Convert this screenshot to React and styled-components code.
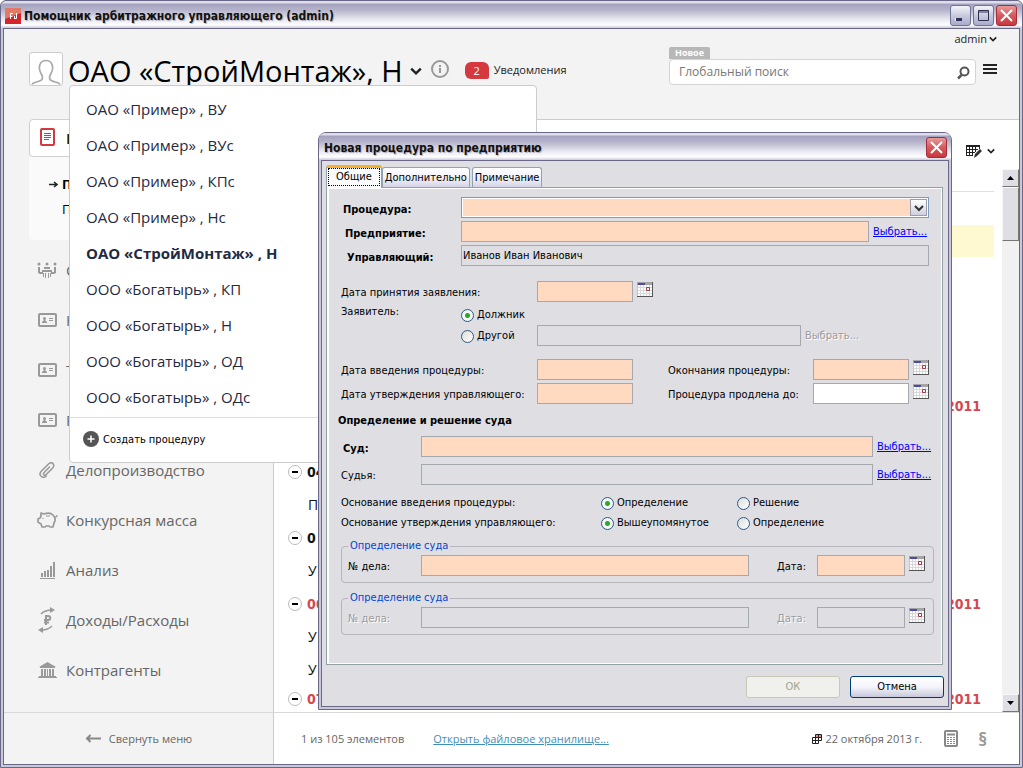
import styled, { createGlobalStyle, css } from "styled-components";

const ui = `"DejaVu Sans Condensed", "DejaVu Sans", sans-serif`;
const text = `"Open Sans", "Noto Sans", sans-serif`;

const GlobalStyle = createGlobalStyle`
  *, *::before, *::after {
    box-sizing: border-box;
  }
  body {
    margin: 0;
    font-family: ${text};
    color: #1a1a1a;
  }
  h1, h2, h3, p, ul {
    margin: 0;
    padding: 0;
    list-style: none;
  }
  button, input, select {
    margin: 0;
    font: inherit;
    color: inherit;
  }
  svg {
    display: block;
    flex: none;
  }
`;

/* window frame */

const Frame = styled.div`
  display: flex;
  flex-direction: column;
  border: 1px solid #6a6888;
  border-radius: ${(p) => (p.$dialog ? "8px 8px 0 0" : "6px 6px 0 0")};
  background: #c9c8d9;
`;

const MainWindow = styled(Frame)`
  position: relative;
  min-height: 100vh;
`;

const Caption = styled.header`
  display: flex;
  align-items: center;
  gap: 2px;
  height: 27px;
  padding: 2px ${(p) => (p.$dialog ? 4 : 5)}px 0 4px;
  border-radius: 6px 6px 0 0;
  background: linear-gradient(#dddce8 0, #dddce8 2px, #a3a1bf 3px, #b5b4ca 9px, #e6e6ee 18px, #fff 24px, #c9c8d9 100%);

  h1, h2 {
    flex: 1;
    padding-left: 1px;
    font-family: ${ui};
    font-size: 12px;
    line-height: 16px;
    font-weight: bold;
    color: #111;
    text-shadow: 1px 1px 1px #aaa9bd;
  }
`;

const CaptionButton = styled.button`
  display: flex;
  align-items: center;
  justify-content: center;
  width: 21px;
  height: 21px;
  padding: 0;
  border: 1px solid ${(p) => (p.$close ? "#a32c3a" : "#6f7396")};
  border-radius: 3px;
  background: ${(p) =>
    p.$close
      ? "linear-gradient(#e89a9a, #d65a5e 50%, #c9393f)"
      : "linear-gradient(#f3f3f9, #c9cade 50%, #a9abca)"};
`;

const Client = styled.div`
  display: flex;
  flex: 1;
  flex-direction: column;
  margin: 0 2px 2px;
  border: 1px solid #6a6888;
  background: #f3f3f3;
`;

/* page header */

const PageHeader = styled.header`
  display: flex;
  align-items: flex-start;
  height: 90px;
  padding: 0 22px 0 25px;
`;

const Avatar = styled.div`
  margin-top: 23px;
  border: 1px solid #ccc;
  border-radius: 3px;
  background: #fff;
`;

const Company = styled.button`
  display: flex;
  align-items: center;
  gap: 7px;
  margin-top: 22px;
  padding: 0 0 0 5px;
  border: 0;
  background: none;
  font-size: 29px;
  line-height: 40px;
  color: #000;
  white-space: nowrap;
`;

const InfoButton = styled.button`
  margin: 31px 0 0 9px;
  padding: 0;
  border: 0;
  background: none;
`;

const Notifications = styled.a`
  display: flex;
  align-items: center;
  gap: 5px;
  margin: 32px 0 0 16px;
  font-size: 11px;
  line-height: 18px;
  color: #222;
  text-decoration: none;

  b {
    width: 24px;
    height: 17px;
    border-radius: 6px 6px 2px 6px;
    background: #d6383f;
    font-weight: normal;
    line-height: 17px;
    color: #fff;
    text-align: center;
  }
`;

const Tools = styled.div`
  display: flex;
  flex-direction: column;
  width: 330px;
  margin-left: auto;
`;

const UserMenu = styled.button`
  display: flex;
  align-items: center;
  align-self: flex-end;
  gap: 2px;
  height: 17px;
  margin-top: 1px;
  padding: 0;
  border: 0;
  background: none;
  font-size: 11px;
  line-height: 17px;
`;

const NewTag = styled.span`
  align-self: flex-start;
  margin-left: 2px;
  padding: 0 6px;
  border-radius: 2px 2px 0 0;
  background: #b8b8b8;
  font-size: 9px;
  font-weight: bold;
  line-height: 12px;
  color: #fff;
`;

const SearchLine = styled.div`
  display: flex;
  align-items: center;
  gap: 7px;
  padding-left: 2px;
`;

const SearchBox = styled.label`
  display: flex;
  flex: 1;
  align-items: center;
  height: 26px;
  padding: 0 4px 0 9px;
  border: 1px solid #d4d4d4;
  border-radius: 4px;
  background: #fff;

  input {
    flex: 1;
    min-width: 0;
    padding: 0;
    border: 0;
    outline: 0;
    background: none;
    font-size: 12px;
    line-height: 18px;
  }
  input::placeholder {
    color: #777;
    opacity: 1;
  }
`;

const PlainButton = styled.button`
  display: flex;
  align-items: center;
  gap: 4px;
  padding: 0;
  border: 0;
  background: none;
`;

/* sidebar */

const Body = styled.div`
  display: flex;
  flex: 1;
`;

const Sidebar = styled.nav`
  width: 269px;
  padding-left: 25px;
`;

const ActiveItem = styled.a`
  display: flex;
  align-items: center;
  gap: 10px;
  height: 38px;
  padding-left: 9px;
  border: 1px solid #d0d0d0;
  border-radius: 4px 0 0 4px;
  background: #fff;
  font-size: 15px;
  font-weight: bold;
  color: #222;
  text-decoration: none;
`;

const SubMenu = styled.ul`
  height: 83px;
  margin-bottom: 5px;
  padding: 15px 0 0 20px;
  border-radius: 0 0 4px 4px;
  background: #fafafa;
  font-size: 13px;
  line-height: 25px;

  li {
    display: grid;
    grid-template-columns: 13px 1fr;
    align-items: center;
  }
  a {
    grid-column: 2;
    color: #000;
    text-decoration: none;
  }
`;

const SideItem = styled.a`
  display: grid;
  grid-template-columns: 22px 1fr;
  align-items: center;
  gap: 8px;
  height: 50px;
  padding-left: 7px;
  font-size: 15px;
  color: #666;
  text-decoration: none;

  svg {
    justify-self: center;
  }
`;

/* list */

const Content = styled.main`
  display: flex;
  flex: 1;
  flex-direction: column;
  min-width: 0;
  border-top: 1px solid #ccc;
  border-left: 1px solid #ccc;
  background: #fff;
`;

const ListTools = styled.div`
  display: flex;
  align-items: center;
  justify-content: flex-end;
  gap: 14px;
  height: 49px;
  padding: 12px 24px 0 0;
  font-size: 13px;
`;

const ListArea = styled.div`
  display: flex;
  flex: 1;
`;

const List = styled.ul`
  display: flex;
  flex: 1;
  flex-direction: column;
  margin-right: 8px;
`;

const ListHead = styled.li`
  height: 23px;
  border-bottom: 1px solid #e0e0e0;
`;

const ListRow = styled.li`
  display: flex;
  align-items: center;
  gap: 5px;
  height: ${(p) => (p.$last ? "26px" : p.$marked ? "32px" : "33px")};
  padding: 0 13px 0 14px;
  background: ${(p) => (p.$marked ? "#fff9d2" : "none")};
  font-family: ${(p) => (p.$group ? ui : text)};
  font-size: 14px;
  font-weight: ${(p) => (p.$group ? "bold" : "normal")};
  color: ${(p) => (p.$late ? "#d6474d" : "#111")};

  > span:first-child {
    padding-left: 20px;
  }
  > time {
    margin-left: auto;
  }
`;

const Scrollbar = styled.div`
  display: flex;
  flex-direction: column;
  width: 17px;
  background: #f1f1f1;
`;

const bevel = css`
  border: 1px solid #f8f8fa;
  border-right-color: #77756f;
  border-bottom-color: #77756f;
  background: #dedee4;
`;

const ScrollButton = styled.button`
  display: flex;
  align-items: center;
  justify-content: center;
  height: 18px;
  padding: 0;
  ${bevel}
`;

const ScrollThumb = styled.div`
  height: 54px;
  margin-bottom: auto;
  ${bevel}
`;

const Footer = styled.footer`
  display: flex;
  height: 52px;
  border-top: 1px solid #d9d9d9;
  background: #fff;
`;

const Collapse = styled.button`
  display: flex;
  align-items: center;
  justify-content: center;
  gap: 8px;
  width: 270px;
  padding: 0;
  border: 0;
  border-right: 1px solid #ccc;
  background: #f3f3f3;
  font-size: 11px;
  color: #666;
`;

const Status = styled.div`
  display: flex;
  flex: 1;
  align-items: center;
  padding: 0 32px 0 27px;
  font-size: 11px;
  color: #666;

  a {
    margin-left: 29px;
    color: #3f8fb8;
  }
  time {
    display: flex;
    align-items: center;
    gap: 3px;
    margin-left: auto;
  }
  button {
    margin-left: 22px;
  }
  button + button {
    margin-left: 20px;
    font-size: 18px;
    font-weight: bold;
    line-height: 20px;
    color: #999;
  }
`;

/* company drop-down */

const Menu = styled.div`
  position: absolute;
  top: 84px;
  left: 68px;
  width: 468px;
  border: 1px solid #ccc;
  border-radius: 4px;
  background: #fff;

  ul {
    padding-top: 5px;
    padding-bottom: 2px;
    border-bottom: 1px solid #ddd;
  }
`;

const MenuItem = styled.a`
  display: block;
  padding-left: 16px;
  font-size: 15px;
  font-weight: ${(p) => (p.$current ? "bold" : "normal")};
  line-height: 36px;
  color: #1f2a44;
  text-decoration: none;
`;

const CreateButton = styled(PlainButton)`
  height: 44px;
  padding: 0 0 2px 13px;
  font-family: ${ui};
  font-size: 11px;
  color: #000;
`;

/* dialog */

const Dialog = styled(Frame).attrs({ role: "dialog", "aria-labelledby": "dialog-title" })`
  position: absolute;
  top: 131px;
  left: 317px;
  width: 634px;
  font-family: ${ui};
  font-size: 11px;
  line-height: 14px;
  color: #000;
`;

const DialogBody = styled(Client)`
  padding: 4px 4px 8px;
  background: #dfdee3;
`;

const Tabs = styled.div`
  display: flex;
  align-items: flex-end;
  gap: 2px;
  height: 22px;
`;

const Tab = styled.button`
  height: 20px;
  padding: 0 2px;
  border: 1px solid #8fa3b5;
  border-bottom: 0;
  border-radius: 3px 3px 0 0;
  background: linear-gradient(#fff, #f2f2fa 50%, #d5d4e8);

  ${(p) =>
    p.$active &&
    css`
      align-self: stretch;
      height: auto;
      margin-right: -2px;
      margin-bottom: -1px;
      padding: 0 1px 2px;
      border-top: 3px solid #f5b030;
      background: #fbfbfc;
      z-index: 1;

      span {
        display: block;
        padding: 1px 7px;
        border: 1px dotted #000;
      }
    `}
`;

const Pane = styled.form`
  display: flex;
  flex-direction: column;
  height: 478px;
  margin-right: 1px;
  padding: 9px 8px 0 14px;
  border: 1px solid #92a0a6;
  box-shadow: inset 2px 1px 0 #fff, inset -1px -1px 0 #fff;
`;

const Group = styled.div`
  display: flex;
  flex-direction: column;
  gap: ${(p) => p.$gap || 3}px;
  margin-bottom: ${(p) => p.$after}px;
`;

const Row = styled.div`
  display: grid;
  grid-template-columns: ${(p) => p.$cols};
  align-items: ${(p) => p.$align || "center"};
  min-height: ${(p) => p.$height || 21}px;
`;

const Label = styled.label`
  padding-top: ${(p) => (p.$bold ? 4 : 2)}px;
  padding-left: ${(p) => p.$indent || 0}px;
  font-weight: ${(p) => (p.$bold ? "bold" : "normal")};
  color: ${(p) => (p.$off ? "#9b9aa0" : "#000")};
  text-shadow: ${(p) => (p.$off ? "1px 1px 0 #fff" : "none")};
  white-space: nowrap;
`;

const RadioTitle = styled.span`
  align-self: start;
`;

const Field = styled.input`
  width: 100%;
  min-width: 0;
  height: 21px;
  padding: 0 1px;
  border: 1px solid #a3a9ae;
  border-radius: 0;
  outline: 0;
  background: ${(p) => (p.$needed ? "#ffdac0" : p.$free ? "#fff" : "#dfdee3")};
`;

const SelectBox = styled.div`
  display: flex;
  height: 21px;
  padding: 1px;
  border: 1px solid #7f9db9;
  background: #fff;

  select {
    flex: 1;
    padding: 0;
    border: 0;
    border-radius: 0;
    outline: 0;
    appearance: none;
    background: #ffdac0;
  }
  span {
    display: flex;
    align-items: center;
    justify-content: center;
    width: 17px;
    border: 1px solid #9a9cb0;
    background: linear-gradient(#fff, #cfcfe0);
    pointer-events: none;
  }
`;

const PickLink = styled.a`
  padding-left: 4px;
  color: ${(p) => (p.$off ? "#9b9aa0" : "#00f")};
  text-decoration: ${(p) => (p.$off ? "none" : "underline")};
  text-shadow: ${(p) => (p.$off ? "1px 1px 0 #fff" : "none")};
  white-space: nowrap;
`;

const Radio = styled.label`
  display: flex;
  align-items: center;
  gap: 3px;
  padding-top: 1px;
  white-space: nowrap;

  input {
    width: 13px;
    height: 13px;
    border: 1px solid #2c5a87;
    border-radius: 50%;
    appearance: none;
    background: linear-gradient(135deg, #dcdcd7, #fff);
  }
  input:checked {
    background: radial-gradient(circle, #25b025 0, #2ba52b 2px, #f6f6f4 3px);
  }
`;

const SectionTitle = styled.h3`
  margin: 0 0 8px -3px;
  font-size: 11px;
  line-height: 14px;
`;

const Ruling = styled.fieldset`
  min-width: 0;
  margin: 0 0 8px;
  padding: 2px 0 6px 6px;
  border: 1px solid #b8b4bc;
  border-radius: 4px;

  legend {
    padding: 0 2px;
    line-height: 14px;
    color: #0046d5;
  }
`;

const Buttons = styled.div`
  display: flex;
  justify-content: flex-end;
  gap: 10px;
  margin-top: 11px;
`;

const DialogButton = styled.button`
  width: 94px;
  height: 22px;
  padding: 0;
  border: 1px solid #003c74;
  border-radius: 3px;
  background: linear-gradient(#fff, #f4f4fa 50%, #c8c8dc);

  &:disabled {
    border-color: #c9c7ba;
    background: #f0f1ec;
    color: #a1a192;
  }
`;

const DateButton = styled(PlainButton)`
  align-self: start;
  padding: 1px 0 0 4px;
`;

/* icons */

const Chevron = ({ size = 10, color = "#222" }) => (
  <svg width={size} height={size} viewBox="0 0 10 10" fill="none" stroke={color} strokeWidth="2">
    <path d="M1 3l4 4 4-4" />
  </svg>
);

const CloseGlyph = () => (
  <svg width="13" height="13" viewBox="0 0 13 13" fill="none" stroke="#fff" strokeWidth="2">
    <path d="M1 1l11 11M12 1L1 12" />
  </svg>
);

const LogoIcon = () => (
  <svg width="16" height="16" viewBox="0 0 16 16">
    <rect width="16" height="16" fill="#d8232a" />
    <path d="M0 0h16v5L0 11z" fill="#e27a68" />
    <path d="M5.500 11V5.500H8M5.500 8.500h2M11.500 5v5.500H9M9.500 8v2" fill="none" stroke="#fff" />
  </svg>
);

const PersonIcon = () => (
  <svg width="32" height="32" viewBox="0 0 32 32" fill="none" stroke="#aaa" strokeWidth="1.700">
    <path d="M2 31.500c1-3 8-2 10-5 1-2 1-3-1-6-2-4-2-7-1-9 1-3 3-4 6-4s5 1 6 4c1 2 1 5-1 9-2 3-2 4-1 6 2 3 9 2 10 5" />
  </svg>
);

const InfoIcon = () => (
  <svg width="18" height="18" viewBox="0 0 18 18" fill="none" stroke="#999" strokeWidth="2">
    <circle cx="9" cy="9" r="8" />
    <path d="M9 8v5M9 5v2" />
  </svg>
);

const SearchIcon = () => (
  <svg width="15" height="15" viewBox="0 0 15 15" fill="none" stroke="#555" strokeWidth="2">
    <circle cx="8.500" cy="6.500" r="4" />
    <path d="M5.500 10L2 13.500" strokeWidth="2.500" />
  </svg>
);

const BurgerIcon = () => (
  <svg width="14" height="16" viewBox="0 0 14 16" stroke="#222" strokeWidth="2">
    <path d="M0 1h14M0 5h14M0 9h14" />
  </svg>
);

const DocIcon = () => (
  <svg width="17" height="20" viewBox="0 0 17 20" fill="none" stroke="#d6383f">
    <rect x="2" y="1" width="13" height="16" rx="1" strokeWidth="2" />
    <path d="M5 5.500h7M5 7.500h7M5 9.500h7M5 11.500h5" />
  </svg>
);

const ArrowRight = () => (
  <svg width="9" height="7" viewBox="0 0 9 7" fill="none" stroke="#222" strokeWidth="1.5">
    <path d="M0 3.5h8M5 1l3 2.500-3 2.500" />
  </svg>
);

const ArrowLeft = () => (
  <svg width="16" height="9" viewBox="0 0 16 9" fill="none" stroke="#888" strokeWidth="2">
    <path d="M16 4.500H2M5.500 1L2 4.500 5.500 8" />
  </svg>
);

const MeetingIcon = () => (
  <svg width="20" height="16" viewBox="0 0 20 16" fill="#999">
    <circle cx="2" cy="2" r="1.500" />
    <circle cx="10" cy="2" r="1.500" />
    <circle cx="18" cy="2" r="1.500" />
    <path d="M7 5h6v2H7zM1 5h2v5h3v2H3l-2-1zM19 5h-2v5h-3v2h3l2-1zM5 8h10v2H5zM6 11h1v4H6zM8 11h1v5H8zM11 11h1v5h-1zM13 11h1v4h-1z" />
  </svg>
);

const CardIcon = () => (
  <svg width="19" height="14" viewBox="0 0 19 14" fill="#999">
    <rect x="1" y="1" width="17" height="12" rx="1" fill="none" stroke="#999" strokeWidth="2" />
    <circle cx="6.500" cy="5.500" r="1.500" />
    <path d="M4 10V9l2-2h1l2 2v1zM11 5h4v1h-4zM11 7h4v1h-4z" />
  </svg>
);

const ClipIcon = () => (
  <svg width="16" height="17" viewBox="0 0 16 17" fill="none" stroke="#999" strokeWidth="1.500" strokeLinecap="round">
    <path d="M10.500 5L5 10.800c-1.500 1.700.5 3.500 2 2l6.500-6.500C17 2.500 12.500-1 9.500 2L2.500 9c-3.800 4 1 8.500 4.800 5" />
  </svg>
);

const PigIcon = () => (
  <svg width="21" height="16" viewBox="0 0 21 16" fill="none" stroke="#999" strokeWidth="1.700" strokeLinejoin="round">
    <path d="M4 1l3 1c3-1 7-1 9 1 2 2 3 5 1 8l-1 4h-3l-1-1H9l-1 1H5l-1-3-3-2V7l2-1 1-2z" />
    <path d="M18 5c2 0 2-1 2-2M9 4h4M6 6v1" strokeWidth="1.200" />
  </svg>
);

const BarsIcon = () => (
  <svg width="15" height="17" viewBox="0 0 15 17" fill="#999">
    <path d="M1 11h2v4H1zM4 9h2v6H4zM7 8h2v7H7zM10 4h2v11h-2zM13 0h2v15h-2zM0 16h15v1H0z" />
  </svg>
);

const MoneyIcon = () => (
  <svg width="18" height="26" viewBox="0 0 18 26" fill="none" stroke="#999" strokeWidth="1.500">
    <path d="M3 7c3-3 6-4 11-4M14 19c-3 3-5 4-10 4" />
    <path d="M12 0l5 3-5 3zM5 20l-5 3 5 3z" fill="#999" stroke="none" />
    <path d="M8 18V9h2c3 0 3 4 0 4H6M6 15.500h5" strokeWidth="2" />
  </svg>
);

const BankIcon = () => (
  <svg width="19" height="17" viewBox="0 0 19 17" fill="#999">
    <path d="M9.500 0L18 5H1zM2 5h15v1H2zM3 7h2v7H3zM6 7h2v7H6zM11 7h2v7h-2zM14 7h2v7h-2zM9 7h1v7H9zM1 14h17v1H1zM0 15h19v1H0z" />
  </svg>
);

const MinusIcon = () => (
  <svg width="14" height="14" viewBox="0 0 14 14">
    <circle cx="7" cy="7" r="6.500" fill="#fff" stroke="#bbb" />
    <path d="M4 6h6v2H4z" fill="#000" />
  </svg>
);

const PlusIcon = () => (
  <svg width="16" height="16" viewBox="0 0 16 16">
    <circle cx="8" cy="8" r="8" fill="#555" />
    <path d="M8 4.500v7M4.500 8h7" stroke="#fff" strokeWidth="1.500" />
  </svg>
);

const GridEditIcon = () => (
  <svg width="17" height="14" viewBox="0 0 17 14">
    <path d="M0 1h14v2H0z" fill="#222" />
    <path d="M.5 3v9M3.500 3v9M6.500 3v8M9.500 3v5M13.500 3v2M0 5.500h12M0 8.500h9M0 11.500h7" stroke="#222" fill="none" />
    <path d="M8 14l1-4 5-5 2 2-5 5z" fill="#333" />
  </svg>
);

const CalendarIcon = () => (
  <svg width="16" height="15" viewBox="0 0 16 15">
    <path d="M0 0h16v15H0z" fill="#fff" />
    <path d="M3.500 3v11M6.500 3v11M9.500 3v11M12.500 3v11M0 5.500h15M0 8.500h15M0 11.500h15" stroke="#d8d8dc" />
    <path d="M0 0h16v3H0z" fill="#a5a5a5" />
    <path d="M1 1h7v2H1z" fill="#4a4ab0" />
    <path d="M.5 3v11" stroke="#c8c8cc" />
    <path d="M15.500 0v15M0 14.500h16" stroke="#555" />
    <path d="M9.500 5.500h3v3h-3z" fill="#fff" stroke="#a33c44" />
  </svg>
);

const DateIcon = () => (
  <svg width="10" height="10" viewBox="0 0 10 10" fill="none" stroke="#222">
    <path d="M4 1h5v3H4z" fill="#f08a8a" stroke="none" />
    <path d="M3.500.5h6v6h-3v3h-6v-6h9M3.500.5v9M6.500.5v6M.5 6.500h6" />
  </svg>
);

const CalcIcon = () => (
  <svg width="14" height="17" viewBox="0 0 14 17" fill="none" stroke="#888">
    <rect x="1" y="1" width="12" height="15" rx="1" strokeWidth="2" />
    <path d="M3 4.500h8" strokeWidth="2" />
    <path d="M3 7.500h8M3 9.500h8M3 11.500h8M3 13.500h8" strokeDasharray="2 1" />
  </svg>
);

const companies = [
  "ОАО «Пример» , ВУ",
  "ОАО «Пример» , ВУс",
  "ОАО «Пример» , КПс",
  "ОАО «Пример» , Нс",
  "ОАО «СтройМонтаж» , Н",
  "ООО «Богатырь» , КП",
  "ООО «Богатырь» , Н",
  "ООО «Богатырь» , ОД",
  "ООО «Богатырь» , ОДс",
];

const sections = [
  { icon: <MeetingIcon />, name: "С" },
  { icon: <CardIcon />, name: "К" },
  { icon: <CardIcon />, name: "Т" },
  { icon: <CardIcon />, name: "Р" },
  { icon: <ClipIcon />, name: "Делопроизводство" },
  { icon: <PigIcon />, name: "Конкурсная масса" },
  { icon: <BarsIcon />, name: "Анализ" },
  { icon: <MoneyIcon />, name: "Доходы/Расходы" },
  { icon: <BankIcon />, name: "Контрагенты" },
];

const rows = [
  {},
  { marked: true },
  {},
  {},
  {},
  {},
  { group: true, late: true, date: ".2011" },
  {},
  { group: true, name: "04" },
  { name: "П" },
  { group: true, name: "0" },
  { name: "У" },
  { group: true, late: true, name: "06", date: ".2011" },
  { name: "У" },
  { name: "У" },
  { group: true, late: true, name: "07", date: ".2011", last: true },
];

function CompanyMenu() {
  return (
    <Menu>
      <ul>
        {companies.map((name) => (
          <li key={name}>
            <MenuItem href="#" $current={name.includes("СтройМонтаж")}>
              {name}
            </MenuItem>
          </li>
        ))}
      </ul>
      <CreateButton type="button">
        <PlusIcon />
        Создать процедуру
      </CreateButton>
    </Menu>
  );
}

function PickDate() {
  return (
    <DateButton type="button" aria-label="Выбрать дату">
      <CalendarIcon />
    </DateButton>
  );
}

function RulingBox({ id, off }) {
  return (
    <Ruling>
      <legend>Определение суда</legend>
      <Row $cols="73px 1fr 68px 88px 28px">
        <Label htmlFor={`${id}-number`} $off={off}>
          № дела:
        </Label>
        <Field id={`${id}-number`} $needed={!off} disabled={off} />
        <Label htmlFor={`${id}-date`} $indent={28} $off={off}>
          Дата:
        </Label>
        <Field id={`${id}-date`} $needed={!off} disabled={off} />
        <PickDate />
      </Row>
    </Ruling>
  );
}

function ProcedureDialog() {
  return (
    <Dialog $dialog>
      <Caption $dialog>
        <h2 id="dialog-title">Новая процедура по предприятию</h2>
        <CaptionButton $close aria-label="Закрыть">
          <CloseGlyph />
        </CaptionButton>
      </Caption>
      <DialogBody>
        <Tabs role="tablist">
          <Tab role="tab" $active>
            <span>Общие</span>
          </Tab>
          <Tab role="tab">Дополнительно</Tab>
          <Tab role="tab">Примечание</Tab>
        </Tabs>
        <Pane>
          <Group $after={15}>
            <Row $cols="120px 1fr 5px">
              <Label htmlFor="procedure" $bold $indent={2}>
                Процедура:
              </Label>
              <SelectBox>
                <select id="procedure" />
                <span>
                  <Chevron color="#333" />
                </span>
              </SelectBox>
            </Row>
            <Row $cols="120px 1fr 65px">
              <Label htmlFor="firm" $bold $indent={4}>
                Предприятие:
              </Label>
              <Field id="firm" $needed />
              <PickLink href="#">Выбрать...</PickLink>
            </Row>
            <Row $cols="120px 1fr 5px">
              <Label htmlFor="manager" $bold $indent={6}>
                Управляющий:
              </Label>
              <Field id="manager" defaultValue="Иванов Иван Иванович" readOnly />
            </Row>
          </Group>

          <Group $after={13}>
            <Row $cols="196px 96px 1fr">
              <Label htmlFor="accepted">Дата принятия заявления:</Label>
              <Field id="accepted" $needed />
              <PickDate />
            </Row>
            <Row $cols="120px 1fr" $height={17} $align="end">
              <RadioTitle>Заявитель:</RadioTitle>
              <Radio>
                <input type="radio" name="applicant" defaultChecked />
                Должник
              </Radio>
            </Row>
            <Row $cols="120px 76px 264px 1fr">
              <span />
              <Radio>
                <input type="radio" name="applicant" />
                Другой
              </Radio>
              <Field aria-label="Другой заявитель" disabled />
              <PickLink $off>Выбрать...</PickLink>
            </Row>
          </Group>

          <Group $after={10}>
            <Row $cols="196px 96px 35px 145px 96px 1fr">
              <Label htmlFor="started">Дата введения процедуры:</Label>
              <Field id="started" $needed />
              <span />
              <Label htmlFor="ended">Окончания процедуры:</Label>
              <Field id="ended" $needed />
              <PickDate />
            </Row>
            <Row $cols="196px 96px 35px 145px 96px 1fr">
              <Label htmlFor="approved">Дата утверждения управляющего:</Label>
              <Field id="approved" $needed />
              <span />
              <Label htmlFor="extended">Процедура продлена до:</Label>
              <Field id="extended" $free />
              <PickDate />
            </Row>
          </Group>

          <SectionTitle>Определение и решение суда</SectionTitle>

          <Group $gap={7} $after={10}>
            <Row $cols="80px 1fr 61px">
              <Label htmlFor="court" $bold $indent={2}>
                Суд:
              </Label>
              <Field id="court" $needed />
              <PickLink href="#">Выбрать...</PickLink>
            </Row>
            <Row $cols="80px 1fr 61px">
              <Label htmlFor="judge">Судья:</Label>
              <Field id="judge" readOnly />
              <PickLink href="#">Выбрать...</PickLink>
            </Row>
          </Group>

          <Group $gap={5} $after={9}>
            <Row $cols="260px 136px 1fr" $height={15}>
              <span>Основание введения процедуры:</span>
              <Radio>
                <input type="radio" name="start-basis" defaultChecked />
                Определение
              </Radio>
              <Radio>
                <input type="radio" name="start-basis" />
                Решение
              </Radio>
            </Row>
            <Row $cols="260px 136px 1fr" $height={15}>
              <span>Основание утверждения управляющего:</span>
              <Radio>
                <input type="radio" name="approve-basis" defaultChecked />
                Вышеупомянутое
              </Radio>
              <Radio>
                <input type="radio" name="approve-basis" />
                Определение
              </Radio>
            </Row>
          </Group>

          <RulingBox id="first" />
          <RulingBox id="second" off />
        </Pane>
        <Buttons>
          <DialogButton disabled>ОК</DialogButton>
          <DialogButton>Отмена</DialogButton>
        </Buttons>
      </DialogBody>
    </Dialog>
  );
}

function App() {
  return (
    <>
      <GlobalStyle />
      <MainWindow>
        <Caption>
          <LogoIcon />
          <h1>Помощник арбитражного управляющего (admin)</h1>
          <CaptionButton aria-label="Свернуть">
            <svg width="13" height="13" viewBox="0 0 13 13">
              <path d="M1.500 9.500h6v2h-6z" fill="#223" stroke="#fff" />
              <path d="M2 9h6v3H2z" fill="#2d3050" />
            </svg>
          </CaptionButton>
          <CaptionButton aria-label="Развернуть">
            <svg width="13" height="13" viewBox="0 0 13 13" fill="none" stroke="#2d3050">
              <path d="M1.500 1.500h10v10h-10zM1 3h11" />
            </svg>
          </CaptionButton>
          <CaptionButton $close aria-label="Закрыть">
            <CloseGlyph />
          </CaptionButton>
        </Caption>
        <Client>
          <PageHeader>
            <Avatar>
              <PersonIcon />
            </Avatar>
            <Company type="button">
              ОАО «СтройМонтаж», Н
              <Chevron size={12} />
            </Company>
            <InfoButton type="button" aria-label="Сведения">
              <InfoIcon />
            </InfoButton>
            <Notifications href="#">
              <b>2</b>
              Уведомления
            </Notifications>
            <Tools>
              <UserMenu type="button">
                admin
                <Chevron size={8} />
              </UserMenu>
              <NewTag>Новое</NewTag>
              <SearchLine>
                <SearchBox>
                  <input type="search" placeholder="Глобальный поиск" aria-label="Глобальный поиск" />
                  <SearchIcon />
                </SearchBox>
                <PlainButton type="button" aria-label="Меню">
                  <BurgerIcon />
                </PlainButton>
              </SearchLine>
            </Tools>
          </PageHeader>

          <Body>
            <Sidebar>
              <ActiveItem href="#">
                <DocIcon />
                П
              </ActiveItem>
              <SubMenu>
                <li>
                  <ArrowRight />
                  <a href="#">
                    <b>П</b>
                  </a>
                </li>
                <li>
                  <a href="#">П</a>
                </li>
              </SubMenu>
              {sections.map(({ icon, name }) => (
                <SideItem key={name} href="#">
                  {icon}
                  {name}
                </SideItem>
              ))}
            </Sidebar>
            <Content>
              <ListTools>
                <span>г.</span>
                <PlainButton type="button" aria-label="Настроить таблицу">
                  <GridEditIcon />
                  <Chevron size={8} />
                </PlainButton>
              </ListTools>
              <ListArea>
                <List>
                  <ListHead />
                  {rows.map((row, i) => (
                    <ListRow key={i} $group={row.group} $late={row.late} $marked={row.marked} $last={row.last}>
                      {row.group && row.name && <MinusIcon />}
                      <span>{row.name}</span>
                      {row.date && <time>{row.date}</time>}
                    </ListRow>
                  ))}
                </List>
                <Scrollbar>
                  <ScrollButton type="button" aria-label="Вверх">
                    <svg width="7" height="4" viewBox="0 0 7 4">
                      <path d="M0 4l3.500-4L7 4z" />
                    </svg>
                  </ScrollButton>
                  <ScrollThumb />
                  <ScrollButton type="button" aria-label="Вниз">
                    <svg width="7" height="4" viewBox="0 0 7 4">
                      <path d="M0 0l3.500 4L7 0z" />
                    </svg>
                  </ScrollButton>
                </Scrollbar>
              </ListArea>
            </Content>
          </Body>

          <Footer>
            <Collapse type="button">
              <ArrowLeft />
              Свернуть меню
            </Collapse>
            <Status>
              <span>1 из 105 элементов</span>
              <a href="#">Открыть файловое хранилище...</a>
              <time dateTime="2013-10-22">
                <DateIcon />
                22 октября 2013 г.
              </time>
              <PlainButton type="button" aria-label="Калькулятор">
                <CalcIcon />
              </PlainButton>
              <PlainButton type="button">§</PlainButton>
            </Status>
          </Footer>
        </Client>
        <CompanyMenu />
        <ProcedureDialog />
      </MainWindow>
    </>
  );
}

export default App;
